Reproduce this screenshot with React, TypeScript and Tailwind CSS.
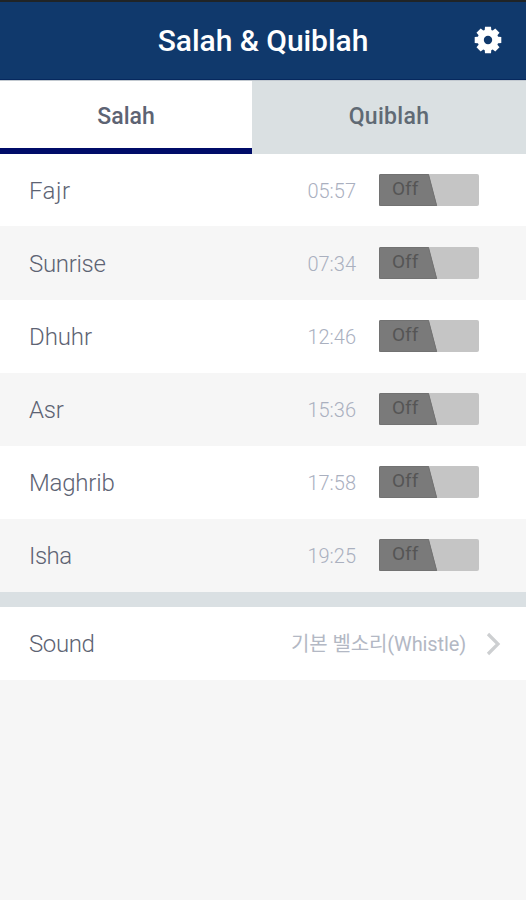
import React from "react";

type Prayer = { name: string; time: string; row: string; label: string; toggle: string };

const prayers: Prayer[] = [
  { name: "Fajr", time: "05:57", row: "h-[72px] bg-white", label: "pt-0.5 tracking-[0.5px]", toggle: "" },
  { name: "Sunrise", time: "07:34", row: "h-[74px] bg-[#f6f6f6]", label: "pt-0.5 tracking-[-0.3px]", toggle: "" },
  { name: "Dhuhr", time: "12:46", row: "h-[73px] bg-white", label: "tracking-[-0.1px]", toggle: "mb-px" },
  { name: "Asr", time: "15:36", row: "h-[73px] bg-[#f6f6f6]", label: "tracking-[-0.2px]", toggle: "mb-px" },
  { name: "Maghrib", time: "17:58", row: "h-[73px] bg-white", label: "tracking-[-0.2px]", toggle: "mb-px" },
  { name: "Isha", time: "19:25", row: "h-[73px] bg-[#f6f6f6]", label: "tracking-[-0.5px]", toggle: "mb-px" },
];

function Gear() {
  return (
    <svg width="28" height="28" viewBox="-14 -14 28 28" aria-hidden="true">
      <g fill="#fff">
        {[0, 45, 90, 135].map((angle) => (
          <path key={angle} transform={`rotate(${angle})`} d="M-3 -13.3H3L3.5 -8V8L3 13.3H-3L-3.5 8V-8Z" />
        ))}
        <circle r="10.5" />
      </g>
      <circle r="4.2" fill="#10396c" />
    </svg>
  );
}

function Toggle({ className }: { className: string }) {
  return (
    <button className={`relative block h-8 w-[100px] overflow-hidden rounded-[2px] bg-[#c5c5c5] ${className}`}>
      <svg className="absolute inset-0" width="100" height="32" aria-hidden="true">
        <path d="M0 0H49.5L58 32H0Z" fill="#7a7a7a" />
        <path d="M0.5 32V0.5H49.5L57.6 31.5H0" fill="none" stroke="#727272" />
      </svg>
      <span className="absolute left-[13px] top-[3px] text-[19px] leading-6 text-[#555]">Off</span>
    </button>
  );
}

export default function App() {
  return (
    <div className="flex h-[900px] w-[526px] flex-col overflow-hidden bg-[#f6f6f6] font-['Roboto','Noto_Sans_CJK_KR',sans-serif] text-[#5d6373]">
      <header className="grid h-20 grid-cols-[1fr_auto_1fr] items-center border-t-2 border-b border-t-[#202426] border-b-[#06285e] bg-[#10396c]">
        <span />
        <h1 className="text-[30px] leading-9 font-medium tracking-[-0.05px] text-white">Salah &amp; Quiblah</h1>
        <button className="mr-6 justify-self-end pb-px"><Gear /></button>
      </header>
      <nav className="flex h-[74px] border-t border-[#c2c9d0] text-[23px] font-medium">
        <button className="w-[252px] border-b-[6px] border-[#000c68] bg-white pt-1.5 text-[#5d6373]">Salah</button>
        <button className="flex-1 bg-[#dae0e2] tracking-[0.3px] text-[#606a74]">Quiblah</button>
      </nav>
      <ul>
        {prayers.map((p) => (
          <li key={p.name} className={`flex items-center pr-[47px] pl-[29px] ${p.row}`}>
            <span className={`flex-1 text-2xl font-light ${p.label}`}>{p.name}</span>
            <span className="mr-[23px] pt-px text-[20px] font-light text-[#aab0bf]">{p.time}</span>
            <Toggle className={p.toggle} />
          </li>
        ))}
      </ul>
      <div className="h-[15px] bg-[#dae0e3]" />
      <section className="flex h-[73px] items-center bg-white pr-[25px] pl-[29px]">
        <span className="flex-1 text-2xl font-light tracking-[-0.4px]">Sound</span>
        <span className="text-[20px] font-normal tracking-[-0.12px] text-[#b3b8c4]">기본 벨소리(Whistle)</span>
        <svg className="ml-5" width="15" height="24" viewBox="0 0 15 24" fill="none" stroke="#cdcfd1" strokeWidth="3.2" aria-hidden="true">
          <path d="M2 2L12 12L2 22" />
        </svg>
      </section>
    </div>
  );
}
